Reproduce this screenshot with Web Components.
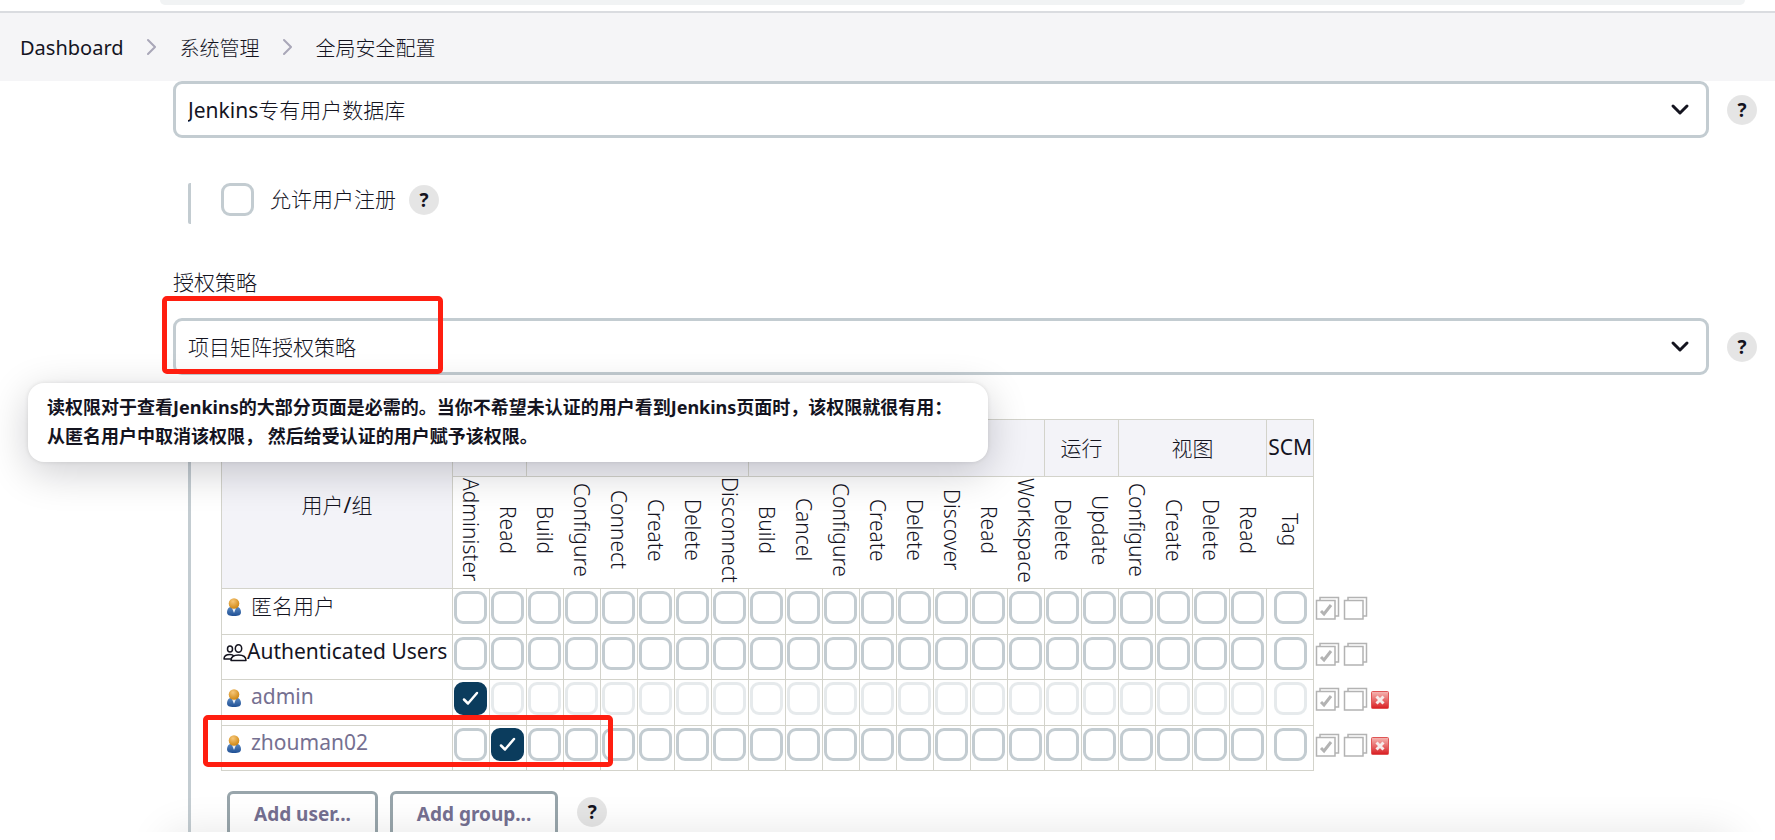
<!DOCTYPE html>
<html lang="zh-CN">
<head>
<meta charset="utf-8">
<title>全局安全配置</title>
<style>
    html, body { margin: 0; height: 100%; }
    body {
        --text: #14141f;
        --muted: #757091;
        --line: #c3ccd1;
        --grid: #d3d3cb;
        --panel: #f3f3f8;
        --danger: #ff1e10;
        background: #fff;
        color: var(--text);
        font-family: "Noto Sans", "Noto Sans CJK SC Light", "Noto Sans CJK SC", sans-serif;
        font-size: 21px;
        overflow: hidden;
    }
</style>
</head>
<body>
<security-page></security-page>

<script>
const define = (name, html, setup) => {
    const template = document.createElement('template');
    template.innerHTML = html;
    customElements.define(name, class extends HTMLElement {
        connectedCallback() {
            if (this.shadowRoot) return;
            this.attachShadow({ mode: 'open' }).appendChild(template.content.cloneNode(true));
            if (setup) setup(this, this.shadowRoot);
        }
    });
};

// Lower edge of the browser toolbar
define('browser-edge', `
    <style>
        :host { display: block; height: 11px; padding: 0 30px 0 160px; border-bottom: 2px solid #dadce0; background: #fff; }
        div { height: 5px; border-radius: 0 0 16px 16px; background: #f1f3f4; }
    </style>
    <div></div>
`);

define('crumb-trail', `
    <style>
        :host { display: block; background: #f5f5f7; }
        ol { display: flex; align-items: center; gap: 23px; height: 68px; margin: 0; padding: 0 20px; list-style: none; font-size: 20px; }
        li { display: flex; align-items: center; gap: 23px; }
        a { color: inherit; text-decoration: none; }
        svg { display: block; width: 10px; height: 18px; fill: none; stroke: #a9a7b8; stroke-width: 2; stroke-linecap: round; stroke-linejoin: round; }
    </style>
    <nav><ol></ol></nav>
`, (host, root) => {
    root.querySelector('ol').innerHTML = host.getAttribute('items').split('|').map((item, i) => `
        <li>${i ? '<svg viewBox="0 0 10 18"><path d="M1 2l7 7-7 7"/></svg>' : ''}<a href="#">${item}</a></li>`).join('');
});

define('help-button', `
    <style>
        :host { display: block; flex: none; }
        button {
            display: grid; place-items: center; width: 30px; height: 30px; padding: 0;
            border: 0; border-radius: 50%; background: rgba(0, 0, 0, 0.1); color: inherit;
            font: 700 19px/30px "Noto Sans", sans-serif;
        }
    </style>
    <button type="button" title="Help">?</button>
`);

define('setting-select', `
    <style>
        :host { display: block; }
        label { display: block; margin-bottom: 20px; line-height: 32px; }
        label:empty { display: none; }
        .row { display: flex; align-items: center; gap: 18px; }
        .box { position: relative; flex: 1; }
        select {
            display: block; width: 100%; height: 57px; padding: 0 48px 0 12px; box-sizing: border-box;
            appearance: none; border: 3px solid var(--line); border-radius: 9px;
            background: #fff; color: inherit; font: inherit;
        }
        svg { position: absolute; right: 19px; top: 22px; width: 20px; height: 14px; pointer-events: none; fill: none; stroke: var(--text); stroke-width: 3; stroke-linecap: round; stroke-linejoin: round; }
    </style>
    <label for="field"></label>
    <div class="row">
        <div class="box">
            <select id="field"><option></option></select>
            <svg viewBox="0 0 20 14"><path d="M3 3l7 7 7-7"/></svg>
        </div>
        <help-button></help-button>
    </div>
`, (host, root) => {
    root.querySelector('label').textContent = host.getAttribute('label') || '';
    root.querySelector('option').textContent = host.getAttribute('value');
    if (!host.hasAttribute('label')) root.querySelector('select').setAttribute('aria-label', host.getAttribute('value'));
});

const checkboxStyle = `
    input {
        display: block; width: 33px; height: 33px; margin: 0; box-sizing: border-box; appearance: none;
        border: 3px solid var(--line); border-radius: 9px; background: #fff;
    }
    input:disabled { opacity: 0.4; }
    input:checked {
        border-color: #0b3c5d;
        background: #0b3c5d url("data:image/svg+xml,%3Csvg xmlns='http://www.w3.org/2000/svg' viewBox='0 0 27 27'%3E%3Cpath d='M7 14.5l4 4 9-10.500' fill='none' stroke='%23fff' stroke-width='2.500' stroke-linecap='round' stroke-linejoin='round'/%3E%3C/svg%3E") center / 27px no-repeat;
    }
`;

define('nested-group', `
    <style>
        :host { display: block; margin-left: 15px; padding-left: 30px; border-left: 3px solid var(--line); border-radius: 2px; }
    </style>
    <slot></slot>
`);

define('setting-check', `
    <style>
        :host { display: flex; align-items: center; gap: 13px; }
        label { display: flex; align-items: center; gap: 16px; line-height: 33px; }
        ${checkboxStyle}
    </style>
    <label><input type="checkbox"><span><slot></slot></span></label>
    <help-button></help-button>
`);

define('user-icon', `
    <style>
        :host { display: block; flex: none; }
        svg { display: block; }
    </style>
    <svg width="16" height="18" viewBox="0 0 16 18">
        <defs>
            <radialGradient id="head" cx=".4" cy=".3" r=".7"><stop offset="0" stop-color="#f7c778"/><stop offset="1" stop-color="#cf8714"/></radialGradient>
            <linearGradient id="body" x2="0" y2="1"><stop offset="0" stop-color="#5d8cc4"/><stop offset="1" stop-color="#1f4f94"/></linearGradient>
        </defs>
        <path d="M1 14c0-3 2-5 4-5.500h6c2 .5 4 2.500 4 5.500 0 3-2 4-7 4s-7-1-7-4z" fill="url(#body)"/>
        <path d="M6 10h4l-2 5z" fill="#e8eef5"/>
        <circle cx="8" cy="5.500" r="5.300" fill="url(#head)"/>
    </svg>
`);

define('group-icon', `
    <style>
        :host { display: block; flex: none; }
        svg { display: block; fill: #fff; stroke: var(--text); stroke-width: 1.5; stroke-linejoin: round; }
    </style>
    <svg width="24" height="20" viewBox="0 0 24 20">
        <ellipse cx="7" cy="6" rx="2.500" ry="3"/>
        <path d="M1 16c0-3 2.500-4.500 6-4.500 2 0 3 .5 4 1.500l-3 3z"/>
        <ellipse cx="15.500" cy="5.500" rx="3.200" ry="3.800"/>
        <path d="M8 17.500c0-3.500 3-5.500 7.500-5.500s7.500 2 7.500 5.500z"/>
    </svg>
`);

const groups = [
    ['', 'Administer', 'Read'],
    ['', 'Build', 'Configure', 'Connect', 'Create', 'Delete', 'Disconnect'],
    ['', 'Build', 'Cancel', 'Configure', 'Create', 'Delete', 'Discover', 'Read', 'Workspace'],
    ['运行', 'Delete', 'Update'],
    ['视图', 'Configure', 'Create', 'Delete', 'Read'],
    ['SCM', 'Tag']
];
const users = [
    { name: '匿名用户' },
    { name: 'Authenticated Users', group: true },
    { name: 'admin', granted: 0, locked: true, removable: true },
    { name: 'zhouman02', granted: 1, removable: true }
];

define('permission-matrix', `
    <style>
        :host { display: block; }
        table { border-collapse: collapse; table-layout: fixed; width: 1140px; }
        .c-name { width: 231px; }
        .c-perm { width: 37px; }
        .c-tag { width: 47px; }
        .c-tools { width: 48px; }
        th, td { padding: 0; border: 1px solid var(--grid); font-weight: 400; box-sizing: border-box; }
        .corner, .group { background: var(--panel); }
        .group { padding-bottom: 2px; }
        .groups { height: 57px; }
        .perms { height: 111px; }
        .perms th { border-width: 1px 0; font-weight: 300; padding-bottom: 5px; }
        .perms th:nth-last-child(2) { border-right-width: 1px; }
        .perms span { display: block; width: 28px; margin: 0 auto; writing-mode: vertical-rl; line-height: 28px; white-space: nowrap; }
        tbody tr { height: 46px; }
        tbody tr:nth-child(even) { height: 45px; }
        tbody th, tbody td { vertical-align: top; }
        .name { display: flex; align-items: center; gap: 9px; height: 37px; padding-left: 4px; white-space: nowrap; }
        .name span { padding-bottom: 5px; }
        .name.wide { padding-left: 1px; gap: 0; }
        .name.account { color: var(--muted); }
        input { margin: 2px auto 0 1px !important; }
        td:nth-last-child(2) input { margin-left: 7px !important; }
        .perms .spacer, .tools, .spacer { border: 0; }
        .tools div { display: flex; align-items: center; gap: 3px; height: 41px; padding-left: 1px; }
        .tools button { flex: none; padding: 0; border: 0; background: none; }
        .tools svg { display: block; }
        .pages { fill: #fff; stroke: #b3b3b3; stroke-width: 1.500; }
        ${checkboxStyle}
    </style>
    <table>
        <colgroup></colgroup>
        <thead></thead>
        <tbody></tbody>
    </table>
`, (host, root) => {
    const perms = groups.flatMap(group => group.slice(1));
    const pages = tick => `<svg class="pages" width="25" height="25" viewBox="0 0 25 25">
        <path d="M5 1.500h18.500v18.500H5z"/><path d="M1.500 4.500h18.500v18.500H1.500z"/>
        ${tick ? '<path d="M6 15l3 3 7-9" fill="none" stroke-width="3"/>' : ''}</svg>`;
    const remove = `<svg width="18" height="18" viewBox="0 0 18 18">
        <defs><linearGradient id="red" x2="0" y2="1"><stop offset="0" stop-color="#f5b8b4"/><stop offset="1" stop-color="#d91c20"/></linearGradient></defs>
        <rect x=".5" y=".5" width="17" height="17" rx="1" fill="url(#red)" stroke="#df5555"/>
        <path d="M5.500 5.500l7 7M12.500 5.500l-7 7" stroke="#f6eceb" stroke-width="3"/></svg>`;

    root.querySelector('colgroup').innerHTML = '<col class="c-name">' +
        '<col class="c-perm">'.repeat(perms.length - 1) + '<col class="c-tag"><col class="c-tools">';
    root.querySelector('thead').innerHTML = `
        <tr class="groups"><th class="corner" rowspan="2">用户/组</th>
            ${groups.map(group => `<th class="group" colspan="${group.length - 1}">${group[0]}</th>`).join('')}<th class="spacer"></th></tr>
        <tr class="perms">${perms.map(perm => `<th><span>${perm}</span></th>`).join('')}<th class="spacer"></th></tr>`;
    root.querySelector('tbody').innerHTML = users.map(user => `
        <tr>
            <th><div class="name ${user.group ? 'wide' : ''} ${user.removable ? 'account' : ''}">
                ${user.group ? '<group-icon></group-icon>' : '<user-icon></user-icon>'}<span>${user.name}</span></div></th>
            ${perms.map((perm, i) => `<td><input type="checkbox" aria-label="${user.name} ${perm}"
                ${user.granted === i ? 'checked' : user.locked ? 'disabled' : ''}></td>`).join('')}
            <td class="tools"><div>
                <button type="button" aria-label="Select all">${pages(true)}</button>
                <button type="button" aria-label="Unselect all">${pages(false)}</button>
                ${user.removable ? `<button type="button" aria-label="Remove">${remove}</button>` : ''}
            </div></td>
        </tr>`).join('');
});

define('outline-button', `
    <style>
        :host { display: block; }
        button {
            height: 47px; padding: 0 24px; border: 3px solid #98a5ab; border-radius: 6px;
            background: transparent; color: var(--muted); font: inherit; font-weight: 700; font-size: 19px;
        }
    </style>
    <button type="button"><slot></slot></button>
`);

define('hover-tip', `
    <style>
        :host {
            display: block; box-sizing: border-box; padding: 10px 19px 11px; border-radius: 16px; background: #fff;
            box-shadow: 0 0 4px rgba(0, 0, 20, 0.1), 0 10px 40px rgba(0, 0, 20, 0.2);
            font: 700 18px/29px "Noto Sans", "Noto Sans CJK SC", sans-serif; white-space: nowrap;
        }
    </style>
    <slot></slot>
`);

define('mark-frame', `
    <style>
        :host { display: block; box-sizing: border-box; border: 5px solid var(--danger); border-radius: 5px; pointer-events: none; }
    </style>
`);

define('security-page', `
    <style>
        :host { display: flex; flex-direction: column; height: 100vh; position: relative; overflow: hidden; }
        main { flex: 1; min-height: 0; padding: 0 18px 0 173px; }
        .signup { margin-top: 45px; margin-bottom: 42px; }
        .signup setting-check { height: 33px; padding-bottom: 8px; }
        .matrix { margin-top: 44px; padding-bottom: 60px; }
        .actions { display: flex; align-items: center; gap: 12px; margin: 20px 0 0 6px; }
        .actions help-button { margin: 0 0 4px 7px; }
        hover-tip { position: absolute; left: 28px; top: 383px; width: 960px; }
        .mark-strategy { position: absolute; left: 162px; top: 296px; width: 281px; height: 78px; }
        .mark-user { position: absolute; left: 203px; top: 715px; width: 410px; height: 52px; }
        /* Sticky save bar, mostly below the fold */
        footer { position: absolute; left: 0; right: 0; bottom: 0; height: 8px; background: #fff; }
        .shade { position: absolute; left: 165px; right: 40px; bottom: -72px; height: 80px; border-radius: 16px; box-shadow: 0 0 40px rgba(0, 0, 0, 0.1); }
    </style>
    <browser-edge></browser-edge>
    <crumb-trail items="Dashboard|系统管理|全局安全配置"></crumb-trail>
    <main>
        <setting-select value="Jenkins专有用户数据库"></setting-select>
        <nested-group class="signup"><setting-check>允许用户注册</setting-check></nested-group>
        <setting-select label="授权策略" value="项目矩阵授权策略"></setting-select>
        <nested-group class="matrix">
            <permission-matrix></permission-matrix>
            <div class="actions">
                <outline-button>Add user...</outline-button>
                <outline-button>Add group...</outline-button>
                <help-button></help-button>
            </div>
        </nested-group>
    </main>
    <div class="shade"></div>
    <footer></footer>
    <hover-tip role="tooltip">读权限对于查看Jenkins的大部分页面是必需的。当你不希望未认证的用户看到Jenkins页面时，该权限就很有用：<br>从匿名用户中取消该权限， 然后给受认证的用户赋予该权限。</hover-tip>
    <mark-frame class="mark-strategy"></mark-frame>
    <mark-frame class="mark-user"></mark-frame>
`);
</script>
</body>
</html>
